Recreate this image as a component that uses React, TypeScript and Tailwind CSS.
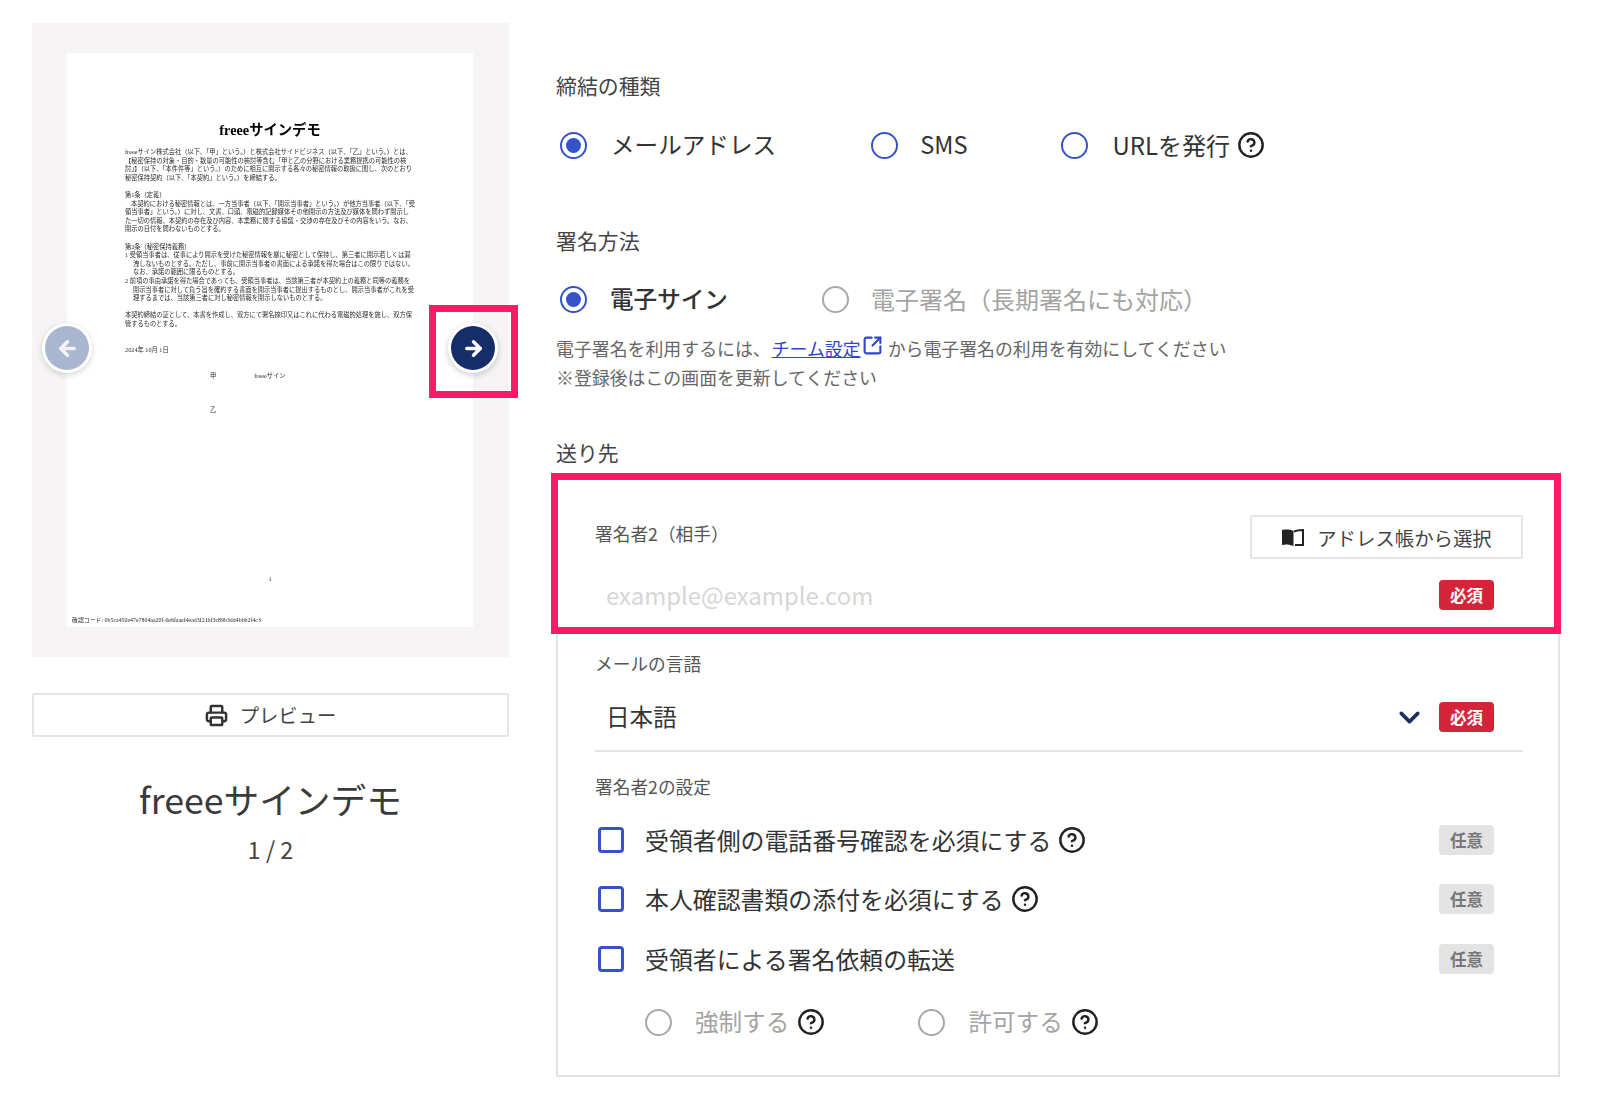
import { ArrowLeft, ArrowRight, ChevronDown, CircleHelp, Printer, SquareArrowOutUpRight } from "lucide-react";

const Help = () => <CircleHelp size={28} strokeWidth={2.1} className="text-[#222] shrink-0" />;

const Radio = ({ checked = false, disabled = false }: { checked?: boolean; disabled?: boolean }) => (
  <span
    className={`w-[27px] h-[27px] rounded-full border-2 flex items-center justify-center shrink-0 bg-white ${
      disabled ? "border-[#a8a8a8]" : "border-[#3552c8]"
    }`}
  >
    {checked && <span className="w-[15px] h-[15px] rounded-full bg-[#3552c8]" />}
  </span>
);

const Badge = ({ required = true }: { required?: boolean }) =>
  required ? (
    <span className="w-[55px] h-[30px] rounded-[4px] bg-[#d3243a] text-white text-[16.5px] font-bold flex items-center justify-center shrink-0">
      必須
    </span>
  ) : (
    <span className="w-[55px] h-[30px] rounded-[4px] bg-[#e3e3e3] text-[#777] text-[16.5px] font-bold flex items-center justify-center shrink-0">
      任意
    </span>
  );

const CheckRow = ({ label, help = true, className }: { label: string; help?: boolean; className: string }) => (
  <div className={`h-[40px] flex items-center pl-[3px] pr-[29px] ${className}`}>
    <span className="w-[26px] h-[26px] rounded-[4px] border-[3px] border-[#3552c8] shrink-0" />
    <span className="ml-[21px] text-[23.9px] text-[#333]">{label}</span>
    {help && <span className="ml-[7px]"><Help /></span>}
    <span className="ml-auto"><Badge required={false} /></span>
  </div>
);

const DocPage = () => (
  <div className="h-[574px] bg-white flex flex-col font-['Liberation_Serif','Noto_Sans_CJK_JP',serif] text-[#2a2a2a] blur-[0.4px]">
    <div className="mt-[67px] text-center text-[14.3px] leading-[20px] font-bold text-black">freeeサインデモ</div>
    <div className="ml-[58px] w-[290px] mt-[8px] text-[6.25px] leading-[8.6px]">
      <p>
        freeeサイン株式会社（以下、「甲」という。）と株式会社サイドビジネス（以下、「乙」という。）とは、【秘密保持の対象・目的・数量の可能性の検討等含む「甲と乙の分野における業務提携の可能性の検討」】（以下、「本件件等」という。）のために相互に開示する各々の秘密情報の取扱に関し、次のとおり秘密保持契約（以下、「本契約」という。）を締結する。
      </p>
      <p className="mt-[8.6px]">第1条（定義）</p>
      <p className="indent-[6px]">
        本契約における秘密情報とは、一方当事者（以下、「開示当事者」という。）が他方当事者（以下、「受領当事者」という。）に対し、文書、口頭、電磁的記録媒体その他開示の方法及び媒体を問わず開示した一切の情報、本契約の存在及び内容、本業務に関する協議・交渉の存在及びその内容をいう。なお、開示の日付を問わないものとする。
      </p>
      <p className="mt-[8.6px]">第2条（秘密保持義務）</p>
      <p className="pl-[8px] -indent-[8px]">
        1 受領当事者は、従事により開示を受けた秘密情報を厳に秘密として保持し、第三者に開示若しくは漏洩しないものとする。ただし、事前に開示当事者の書面による承諾を得た場合はこの限りではない。なお、承諾の範囲に限るものとする。
      </p>
      <p className="pl-[8px] -indent-[8px]">
        2 前項の事由承諾を得た場合であっても、受領当事者は、当該第三者が本契約上の義務と同等の義務を開示当事者に対して負う旨を確約する書面を開示当事者に提出するものとし、開示当事者がこれを受理するまでは、当該第三者に対し秘密情報を開示しないものとする。
      </p>
      <p className="mt-[8.6px]">本契約締結の証として、本書を作成し、双方にて署名捺印又はこれに代わる電磁的処理を施し、双方保管するものとする。</p>
      <p className="mt-[17.6px]">2024年 10月 1日</p>
    </div>
    <div className="mt-[17px] ml-[143px] flex text-[6.25px] leading-[8px]">
      <span>甲</span>
      <span className="ml-[38px]">freeeサイン</span>
    </div>
    <div className="mt-[26px] ml-[143px] text-[6.25px] leading-[8px]">乙</div>
    <div className="mt-[161px] text-center text-[6.25px] leading-[8px]">1</div>
    <div className="mt-[33px] ml-[5px] text-[5.9px] leading-[8px] whitespace-nowrap">確認コード: 0b5ca450e47e7804aa20f-0e6faaef4ead3f21bf3c89b3dd4bbb2f4c3</div>
  </div>
);

export default function App() {
  return (
    <div className="w-[1600px] h-[1097px] bg-white flex items-start overflow-hidden font-['Noto_Sans_CJK_JP',sans-serif] text-[#333]">
      {/* left: document preview */}
      <div className="relative w-[477px] ml-[32px] mt-[23px] shrink-0">
        <div className="bg-[#f6f4f5] pt-[30px] pb-[30px] pl-[35px] pr-[36px]">
          <DocPage />
        </div>

        <button className="absolute left-[13px] top-[303px] w-[44px] h-[44px] rounded-full bg-[#a9b6d0] flex items-center justify-center shadow-[0_0_0_3px_#fff,0_2px_6px_3px_rgba(0,0,0,0.16)]">
          <ArrowLeft size={23} strokeWidth={3.6} className="text-[#f2f4f8]" />
        </button>
        <button className="absolute left-[419px] top-[303px] w-[44px] h-[44px] rounded-full bg-[#152d69] flex items-center justify-center shadow-[0_0_0_3px_#fff,0_2px_6px_3px_rgba(0,0,0,0.2)]">
          <ArrowRight size={23} strokeWidth={3.6} className="text-white" />
        </button>
        <div className="absolute left-[397px] top-[282px] w-[89px] h-[93px] border-[7px] border-[#fb1a64]" />

        <button className="mt-[36px] w-full h-[44px] rounded-[2px] border-2 border-[#e4e4e4] bg-white flex items-center justify-center text-[19.3px] text-[#444]">
          <Printer size={23} strokeWidth={2.6} className="text-[#333]" />
          <span className="ml-[12px]">プレビュー</span>
        </button>
        <div className="mt-[37px] text-center text-[35.7px] leading-[50px] text-[#3a3a3a]">freeeサインデモ</div>
        <div className="mt-[7px] text-center text-[23.5px] leading-[36px] text-[#444]">1 / 2</div>
      </div>

      {/* right: form */}
      <div className="ml-[47px] w-[1004px] shrink-0">
        <div className="mt-[71px] h-[30px] flex items-center text-[20.9px] text-[#444]">締結の種類</div>
        <div className="mt-[24px] h-[40px] flex items-center pl-[4px] text-[23.6px] text-[#333]">
          <Radio checked />
          <span className="ml-[24px]">メールアドレス</span>
          <span className="ml-[95px]"><Radio /></span>
          <span className="ml-[22px]">SMS</span>
          <span className="ml-[94px]"><Radio /></span>
          <span className="ml-[24px] text-[24px]">URLを発行</span>
          <span className="ml-[7px]"><Help /></span>
        </div>

        <div className="mt-[61px] h-[30px] flex items-center text-[20.9px] text-[#444]">署名方法</div>
        <div className="mt-[23px] h-[40px] flex items-center pl-[4px] text-[23.6px]">
          <Radio checked />
          <span className="ml-[23px] font-medium text-[#333]">電子サイン</span>
          <span className="ml-[94px]"><Radio disabled /></span>
          <span className="ml-[22px] text-[24px] text-[#a3a3a3]">電子署名（長期署名にも対応）</span>
        </div>
        <div className="mt-[15px] text-[17.9px] leading-[28.5px] text-[#666]">
          <div className="flex items-center">
            電子署名を利用するには、
            <a className="ml-[1px] text-[#2f45d0] underline">チーム設定</a>
            <SquareArrowOutUpRight size={21} strokeWidth={2.4} className="text-[#2f45d0] ml-[1px] -mt-[5px]" />
            <span className="ml-[5px]">から電子署名の利用を有効にしてください</span>
          </div>
          <div>※登録後はこの画面を更新してください</div>
        </div>

        <div className="mt-[47px] h-[30px] flex items-center text-[20.9px] text-[#444]">送り先</div>

        <div className="relative mt-[6px] h-[603px] border-2 border-[#e2e2e2] pl-[37px] pr-[35px] pt-[39px]">
          <div className="absolute -left-[7px] -top-[3px] w-[1010px] h-[161px] border-[7px] border-[#fb1a64]" />

          <div className="flex items-start justify-between">
            <span className="mt-[3px] text-[17.7px] leading-[30px] text-[#555]">署名者2（相手）</span>
            <button className="w-[273px] h-[44px] rounded-[2px] border-2 border-[#e4e4e4] flex items-center justify-center text-[19.4px] text-[#444]">
              <svg width="22" height="17" viewBox="0 0 22 17" className="mr-[13px] ml-[1px]">
                <path d="M0 1 C4 .3 8 .5 11.5 2 V17 C8 15.5 4 15 0 16 Z" fill="#222" />
                <path d="M12 2.5 C15 1.2 18 1 21 1 V16 H13" fill="none" stroke="#222" strokeWidth="2" />
              </svg>
              <span className="mt-[1px]">アドレス帳から選択</span>
            </button>
          </div>
          <div className="mt-[18px] h-[36px] flex items-center pl-[11px] pr-[29px] justify-between">
            <span className="text-[23.9px] text-[#d6d6d6]">example@example.com</span>
            <Badge />
          </div>

          <div className="mt-[37px] h-[26px] flex items-center text-[17.7px] text-[#555]">メールの言語</div>
          <div className="mt-[23px] pb-[15px] border-b-2 border-[#e4e4e4]">
            <div className="h-[36px] flex items-center pl-[11px] pr-[29px]">
              <span className="text-[23.6px] text-[#333]">日本語</span>
              <ChevronDown size={33} strokeWidth={2.6} className="ml-auto mr-[13px] text-[#1a2e66]" />
              <Badge />
            </div>
          </div>

          <div className="mt-[21px] h-[26px] flex items-center text-[17.7px] text-[#555]">署名者2の設定</div>
          <CheckRow label="受領者側の電話番号確認を必須にする" className="mt-[21px]" />
          <CheckRow label="本人確認書類の添付を必須にする" className="mt-[19px]" />
          <CheckRow label="受領者による署名依頼の転送" help={false} className="mt-[20px]" />

          <div className="mt-[23px] h-[40px] flex items-center pl-[50px] text-[23.6px] text-[#a3a3a3]">
            <Radio disabled />
            <span className="ml-[23px]">強制する</span>
            <span className="ml-[8px]"><Help /></span>
            <span className="ml-[93px]"><Radio disabled /></span>
            <span className="ml-[23px]">許可する</span>
            <span className="ml-[8px]"><Help /></span>
          </div>
        </div>
      </div>
    </div>
  );
}
